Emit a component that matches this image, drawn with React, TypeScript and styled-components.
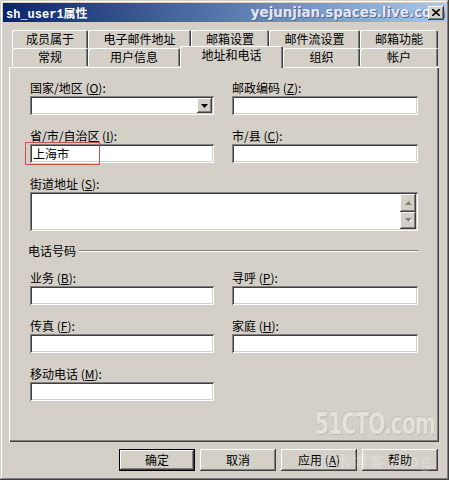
import React from "react";
import styled, { createGlobalStyle, css } from "styled-components";

const GlobalStyle = createGlobalStyle`
    html, body {
        margin: 0;
        padding: 0;
        background: #d4d0c8;
    }
    body {
        font-family: "Noto Sans CJK SC", "Liberation Sans", sans-serif;
        font-size: 12px;
        color: #000;
    }
`;

const raised = css`
    box-shadow: inset -1px -1px #404040, inset 1px 1px #ffffff,
        inset -2px -2px #808080, inset 2px 2px #d4d0c8;
`;

const sunken = css`
    box-shadow: inset 1px 1px #808080, inset -1px -1px #ffffff,
        inset 2px 2px #404040, inset -2px -2px #d4d0c8;
`;

const Window = styled.div`
    width: 449px;
    height: 480px;
    box-sizing: border-box;
    padding: 3px;
    background: #d4d0c8;
    display: flex;
    flex-direction: column;
    box-shadow: inset -1px -1px #404040, inset 1px 1px #d4d0c8,
        inset -2px -2px #808080, inset 2px 2px #ffffff;
`;

const TitleBar = styled.div`
    height: 19px;
    display: flex;
    align-items: center;
    padding: 0 2px 0 3px;
    background: linear-gradient(to right, #0a246a, #a6caf0);
    overflow: hidden;
`;

const Title = styled.span`
    font-family: "Liberation Mono", "Noto Sans CJK SC", monospace;
    font-weight: bold;
    font-size: 12px;
    color: #fff;
    white-space: nowrap;
`;

const TitleWatermark = styled.span`
    margin-left: auto;
    margin-right: -17px;
    font-family: "DejaVu Sans", "Liberation Sans", sans-serif;
    font-weight: bold;
    font-size: 13.4px;
    color: #e4e8f6;
    text-shadow: 1px 1px 0 #56678e, -1px 0 0 #7d8fb6;
    white-space: nowrap;
`;

const CloseButton = styled.div`
    width: 16px;
    height: 14px;
    flex: none;
    background: #d4d0c8;
    display: flex;
    align-items: center;
    justify-content: center;
    ${raised}
`;

const Content = styled.div`
    display: flex;
    flex-direction: column;
    padding: 8px 7px 0 6px;
`;

const TabStrip = styled.div`
    display: flex;
    flex-direction: column;
    margin-left: 3px;
`;

const TabRow = styled.div<{ $h: number }>`
    display: flex;
    align-items: flex-start;
    height: ${p => p.$h}px;
`;

const Tab = styled.div<{ $w: number; $active?: boolean }>`
    width: ${p => p.$w}px;
    height: ${p => (p.$active ? 22 : 18)}px;
    margin-top: ${p => (p.$active ? -2 : 0)}px;
    box-sizing: border-box;
    text-align: center;
    line-height: 18px;
    background: #d4d0c8;
    border-radius: 2px 2px 0 0;
    white-space: nowrap;
    position: relative;
    z-index: ${p => (p.$active ? 2 : 0)};
    box-shadow: inset 1px 1px #ffffff, inset -1px 0 #404040, inset -2px 0 #808080;
`;

const Panel = styled.div`
    height: 375px;
    box-sizing: border-box;
    padding: 13px 21px 0 21px;
    position: relative;
    box-shadow: inset 1px 1px #ffffff, inset -1px -1px #404040,
        inset -2px -2px #808080;
`;

const FormGrid = styled.div`
    display: grid;
    grid-template-columns: 184px 186px;
    column-gap: 18px;
    row-gap: 13px;
`;

const Field = styled.div<{ $span?: boolean }>`
    display: flex;
    flex-direction: column;
    position: relative;
    grid-column: ${p => (p.$span ? "1 / -1" : "auto")};
`;

const Label = styled.div`
    height: 16px;
    line-height: 15px;
    white-space: nowrap;
`;

const Mnemonic = styled.span`
    text-decoration: underline;
`;

const TextBox = styled.div<{ $h?: number }>`
    height: ${p => p.$h ?? 19}px;
    box-sizing: border-box;
    background: #fff;
    padding: 0 3px;
    line-height: 19px;
    display: flex;
    ${sunken}
`;

const ComboBox = styled(TextBox)`
    justify-content: flex-end;
    padding: 2px;
`;

const DropButton = styled.div`
    width: 15px;
    background: #d4d0c8;
    display: flex;
    align-items: center;
    justify-content: center;
    ${raised}
`;

const TextArea = styled(TextBox)`
    justify-content: flex-end;
    padding: 2px;
`;

const ScrollColumn = styled.div`
    width: 16px;
    display: flex;
    flex-direction: column;
`;

const ScrollButton = styled.div`
    flex: 1;
    background: #d4d0c8;
    display: flex;
    align-items: center;
    justify-content: center;
    ${raised}
`;

const Annotation = styled.div`
    position: absolute;
    left: -5px;
    top: 14px;
    width: 75px;
    height: 23px;
    box-sizing: border-box;
    border: 1px solid #c9524c;
    pointer-events: none;
`;

const Separator = styled.div`
    grid-column: 1 / -1;
    display: flex;
    align-items: center;
    gap: 3px;
    height: 13px;
    margin-left: -2px;
`;

const SeparatorLine = styled.div`
    flex: 1;
    border-top: 1px solid #808080;
    border-bottom: 1px solid #ffffff;
`;

const PanelWatermark = styled.div`
    position: absolute;
    right: 4px;
    bottom: 3px;
    font-family: "DejaVu Sans Condensed", "Liberation Sans Narrow", "DejaVu Sans", sans-serif;
    font-stretch: condensed;
    font-weight: bold;
    font-size: 30px;
    line-height: 30px;
    letter-spacing: -1px;
    transform: scaleX(0.74);
    transform-origin: right bottom;
    color: #e4e1da;
    text-shadow: 1px 1px 0 #bdb9b1, -1px -1px 0 #c6c2ba;
    pointer-events: none;
`;

const ButtonRow = styled.div`
    display: flex;
    justify-content: flex-end;
    gap: 5px;
    margin-top: 7px;
    padding-right: 1px;
    position: relative;
`;

const Button = styled.div<{ $default?: boolean }>`
    width: 76px;
    height: 22px;
    box-sizing: border-box;
    background: #d4d0c8;
    text-align: center;
    line-height: 21px;
    ${raised}
    ${p =>
        p.$default &&
        css`
            border: 1px solid #000;
            line-height: 19px;
        `}
`;

const BlogMark = styled.div`
    position: absolute;
    right: 8px;
    top: 1px;
    font-size: 15px;
    color: rgba(255, 255, 255, 0.3);
    letter-spacing: 2px;
    pointer-events: none;
    white-space: nowrap;
`;

function Triangle({ dir, color }: { dir: "up" | "down"; color: string }) {
    const d = dir === "down" ? "M0 0 H7 L3.5 4 Z" : "M0 4 H7 L3.5 0 Z";
    return (
        <svg width="7" height="4" viewBox="0 0 7 4">
            {color !== "#000" && (
                <path d={d} fill="#ffffff" transform="translate(1 1)" />
            )}
            <path d={d} fill={color} />
        </svg>
    );
}

function LabeledInput({ label, keyChar, value }: { label: string; keyChar: string; value?: string }) {
    return (
        <Field>
            <Label>
                {label} (<Mnemonic>{keyChar}</Mnemonic>):
            </Label>
            <TextBox>{value}</TextBox>
        </Field>
    );
}

const topTabs = [
    { text: "成员属于", w: 76 },
    { text: "电子邮件地址", w: 103 },
    { text: "邮箱设置", w: 78 },
    { text: "邮件流设置", w: 91 },
    { text: "邮箱功能", w: 78 },
];

const bottomTabs = [
    { text: "常规", w: 76 },
    { text: "用户信息", w: 92 },
    { text: "地址和电话", w: 103, active: true },
    { text: "组织", w: 77 },
    { text: "帐户", w: 78 },
];

export default function App() {
    return (
        <>
            <GlobalStyle />
            <Window>
                <TitleBar>
                    <Title>sh_user1属性</Title>
                    <TitleWatermark>yejunjian.spaces.live.com</TitleWatermark>
                    <CloseButton>
                        <svg width="8" height="7" viewBox="0 0 8 7">
                            <path d="M0 0 L8 7 M8 0 L0 7" stroke="#000" strokeWidth="1.6" />
                        </svg>
                    </CloseButton>
                </TitleBar>
                <Content>
                    <TabStrip>
                        <TabRow $h={18}>
                            {topTabs.map(t => (
                                <Tab key={t.text} $w={t.w}>
                                    {t.text}
                                </Tab>
                            ))}
                        </TabRow>
                        <TabRow $h={19}>
                            {bottomTabs.map(t => (
                                <Tab key={t.text} $w={t.w} $active={t.active}>
                                    {t.text}
                                </Tab>
                            ))}
                        </TabRow>
                    </TabStrip>
                    <Panel>
                        <FormGrid>
                            <Field>
                                <Label>
                                    国家/地区 (<Mnemonic>O</Mnemonic>):
                                </Label>
                                <ComboBox>
                                    <DropButton>
                                        <Triangle dir="down" color="#000" />
                                    </DropButton>
                                </ComboBox>
                            </Field>
                            <LabeledInput label="邮政编码" keyChar="Z" />
                            <Field>
                                <Label>
                                    省/市/自治区 (<Mnemonic>I</Mnemonic>):
                                </Label>
                                <TextBox>上海市</TextBox>
                                <Annotation />
                            </Field>
                            <LabeledInput label="市/县" keyChar="C" />
                            <Field $span>
                                <Label>
                                    街道地址 (<Mnemonic>S</Mnemonic>):
                                </Label>
                                <TextArea $h={39}>
                                    <ScrollColumn>
                                        <ScrollButton>
                                            <Triangle dir="up" color="#808080" />
                                        </ScrollButton>
                                        <ScrollButton>
                                            <Triangle dir="down" color="#808080" />
                                        </ScrollButton>
                                    </ScrollColumn>
                                </TextArea>
                            </Field>
                            <Separator>
                                <span>电话号码</span>
                                <SeparatorLine />
                            </Separator>
                            <LabeledInput label="业务" keyChar="B" />
                            <LabeledInput label="寻呼" keyChar="P" />
                            <LabeledInput label="传真" keyChar="F" />
                            <LabeledInput label="家庭" keyChar="H" />
                            <LabeledInput label="移动电话" keyChar="M" />
                        </FormGrid>
                        <PanelWatermark>51CTO.com</PanelWatermark>
                    </Panel>
                    <ButtonRow>
                        <Button $default>确定</Button>
                        <Button>取消</Button>
                        <Button>
                            应用 (<Mnemonic>A</Mnemonic>)
                        </Button>
                        <Button>帮助</Button>
                        <BlogMark>技术博客 Blog</BlogMark>
                    </ButtonRow>
                </Content>
            </Window>
        </>
    );
}
